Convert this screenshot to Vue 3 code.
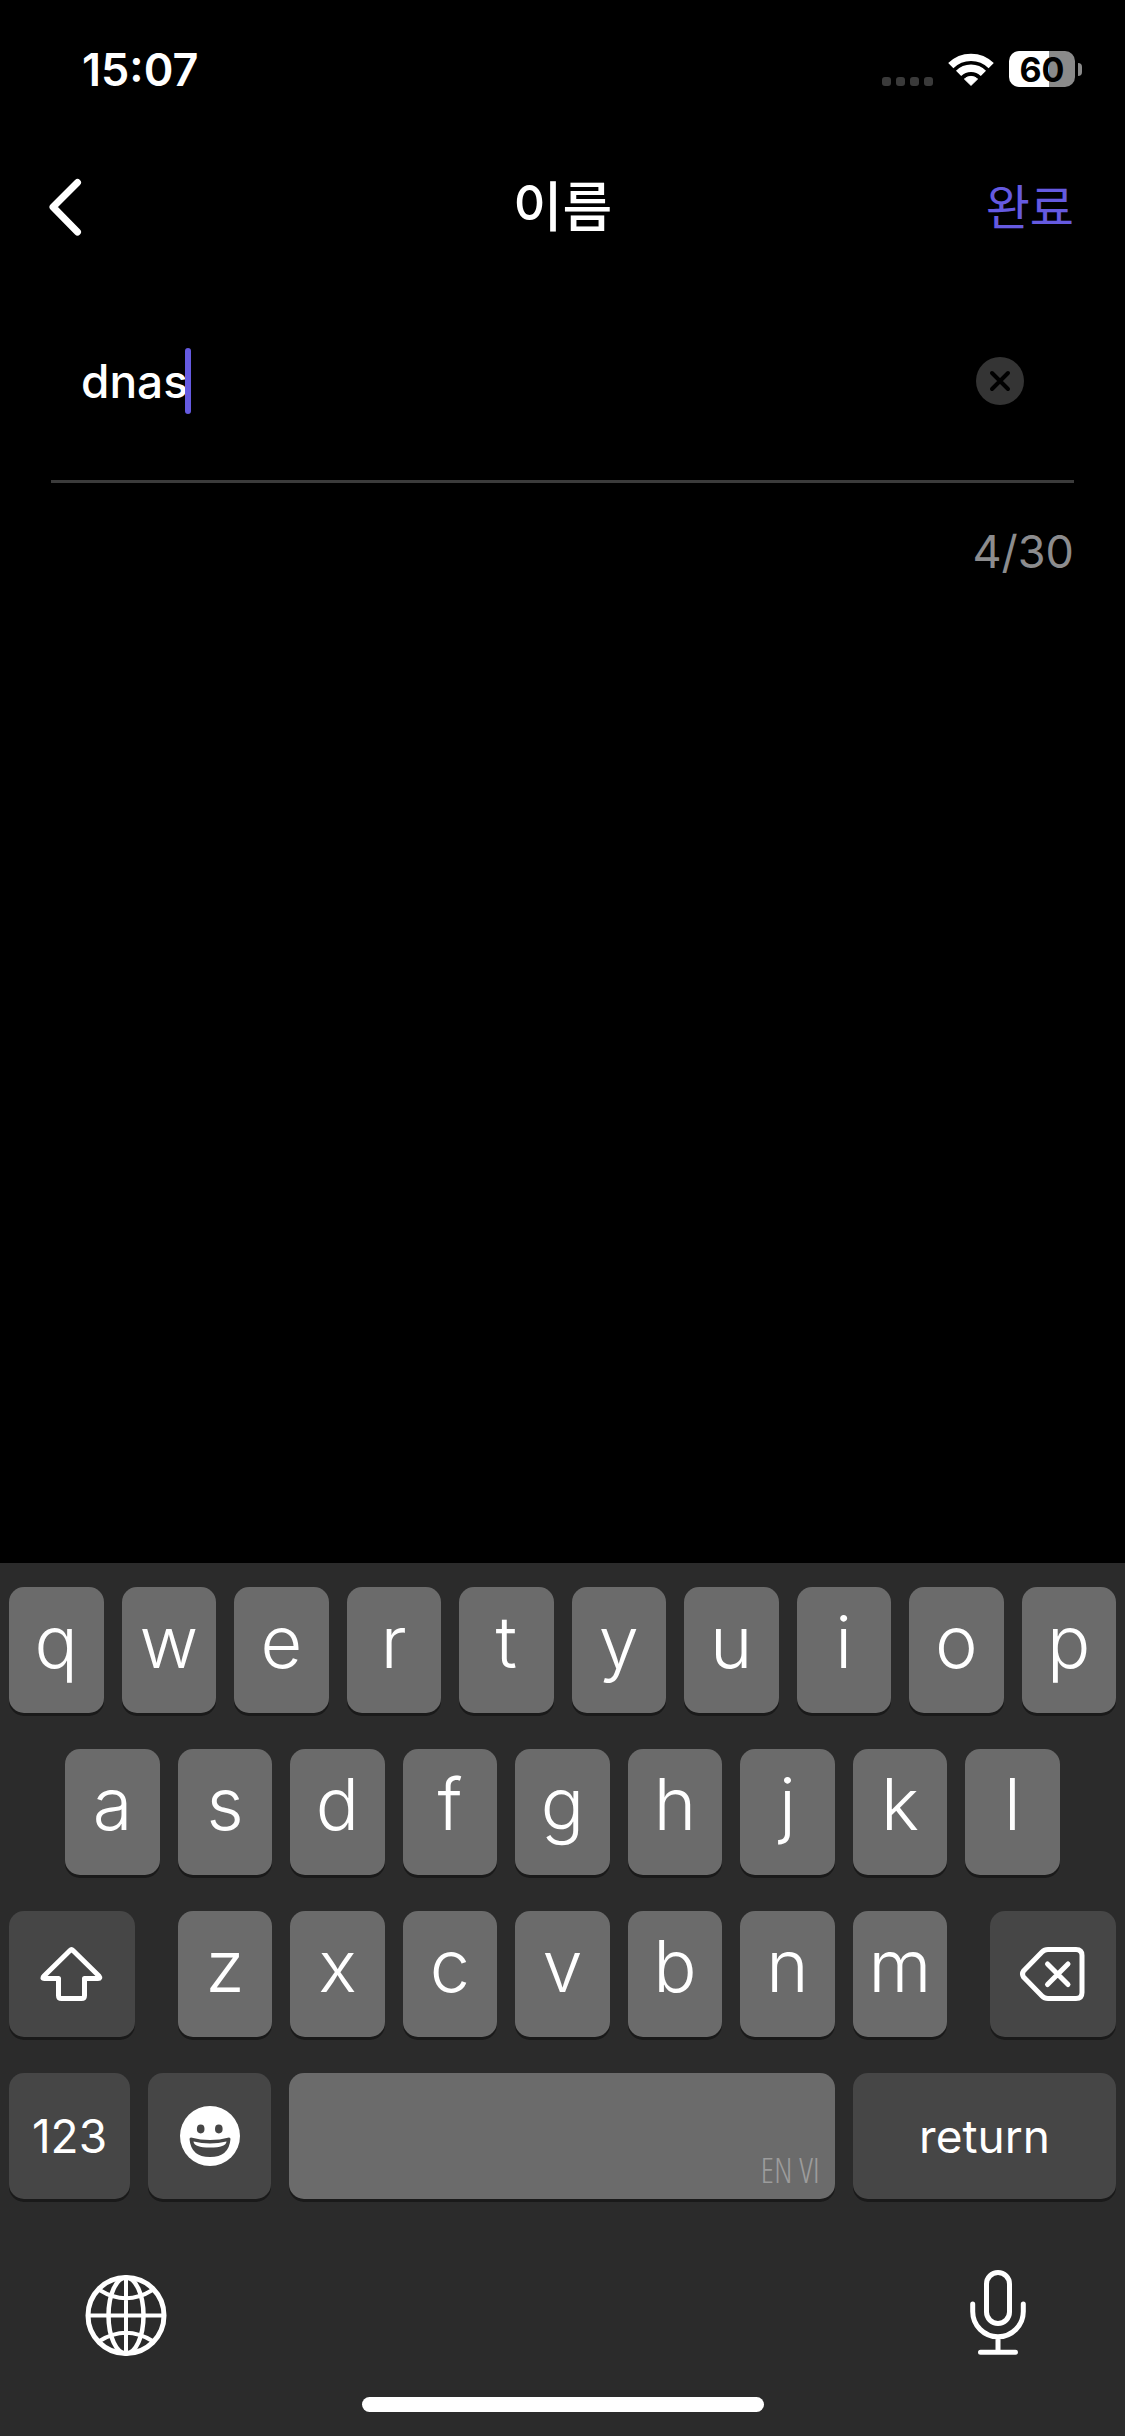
<script setup>
import { computed, ref } from 'vue'

const MAX_LENGTH = 30
const name = ref('dnas')
const count = computed(() => `${name.value.length}/${MAX_LENGTH}`)

const topRow = [...'qwertyuiop']
const homeRow = [...'asdfghjkl']
const bottomRow = [...'zxcvbnm']

const type = (letter) => {
  if (name.value.length < MAX_LENGTH) name.value += letter
}
const erase = () => {
  name.value = name.value.slice(0, -1)
}
</script>

<template>
  <div class="screen">
    <div class="status">
      <time class="clock">15:07</time>
      <div class="indicators">
        <div class="cellular"><i v-for="n in 4" :key="n"></i></div>
        <svg class="wifi" viewBox="0 0 46 33" aria-hidden="true">
          <path d="M2.8 12.6A28.8 28.8 0 0 1 43.2 12.6M10.6 20.4A17.6 17.6 0 0 1 35.4 20.4" fill="none" stroke="#fff" stroke-width="7.4" />
          <path d="M23 32.4L16.4 26A9.6 9.6 0 0 1 29.6 26Z" fill="#fff" stroke="#fff" stroke-linejoin="round" />
        </svg>
        <div class="battery">
          <span class="level">60</span>
          <i class="tip"></i>
        </div>
      </div>
    </div>

    <header class="bar">
      <button class="back" type="button" aria-label="뒤로">
        <svg viewBox="0 0 36 60"><path d="M29.5 5.5L5 30L29.5 55" /></svg>
      </button>
      <h1 class="title">이름</h1>
      <button class="done" type="button">완료</button>
    </header>

    <main class="form">
      <div class="field">
        <label class="entry">
          <input v-model="name" class="input" type="text" :maxlength="MAX_LENGTH" aria-label="이름" />
          <i class="caret"></i>
        </label>
        <button class="clear" type="button" aria-label="지우기" @click="name = ''">
          <svg viewBox="0 0 48 48"><path d="M16 16L32 32M32 16L16 32" /></svg>
        </button>
      </div>
      <p class="count">{{ count }}</p>
    </main>

    <section class="keyboard">
      <div class="row">
        <button v-for="k in topRow" :key="k" class="key letter" type="button" @click="type(k)">{{ k }}</button>
      </div>
      <div class="row">
        <button v-for="k in homeRow" :key="k" class="key letter" type="button" @click="type(k)">{{ k }}</button>
      </div>
      <div class="row spread">
        <button class="key dark square" type="button" aria-label="shift">
          <svg class="glyph" viewBox="0 0 126 126">
            <path d="M61 39.5Q62.5 38 64 39.5L90 65Q92 67.5 89 67.5H75.5V84.5Q75.5 87.5 72.5 87.5H52.5Q49.5 87.5 49.5 84.5V67.5H35.5Q32.5 67.5 35 65Z" />
          </svg>
        </button>
        <div class="row inner">
          <button v-for="k in bottomRow" :key="k" class="key letter" type="button" @click="type(k)">{{ k }}</button>
        </div>
        <button class="key dark square" type="button" aria-label="delete" @click="erase">
          <svg class="glyph" viewBox="0 0 126 126">
            <path d="M58 38.5H86Q92 38.5 92 44.5V81.5Q92 87.5 86 87.5H58Q54.5 87.5 52 85L33.5 66Q31.5 63 33.5 60L52 41Q54.5 38.5 58 38.5Z" />
            <path d="M57.5 53L78 73.5M78 53L57.5 73.5" />
          </svg>
        </button>
      </div>
      <div class="row wide">
        <button class="key dark numbers" type="button">123</button>
        <button class="key dark emoji" type="button" aria-label="emoji">
          <svg class="face" viewBox="0 0 60 60">
            <circle cx="30" cy="30" r="30" fill="#fff" />
            <g fill="#464646">
              <ellipse cx="20.7" cy="23" rx="3.8" ry="4.4" />
              <ellipse cx="38.8" cy="23" rx="3.8" ry="4.4" />
              <path d="M11 31.5Q30 36.5 49 31.5Q50.5 31.5 50.5 33Q49 51 30 51Q11 51 9.5 33Q9.5 31.5 11 31.5Z" />
            </g>
            <path d="M13.5 35.5Q30 39.5 46.5 35.5Q46 41.5 30 41.5Q14 41.5 13.5 35.5Z" fill="#fff" />
          </svg>
        </button>
        <button class="key space" type="button" @click="type(' ')">EN VI</button>
        <button class="key dark return" type="button">return</button>
      </div>
      <div class="tools">
        <button class="tool" type="button" aria-label="language">
          <svg viewBox="0 0 84 88">
            <circle cx="42" cy="46.5" r="38" />
            <ellipse cx="42" cy="46.5" rx="17.5" ry="38" stroke-width="4.5" />
            <path d="M42 8V85M4 46.5H80M15.5 21Q42 37.5 68.5 21M15.5 72Q42 55.5 68.5 72" stroke-width="4" />
          </svg>
        </button>
        <button class="tool" type="button" aria-label="dictation">
          <svg viewBox="0 0 84 88">
            <rect x="29.5" y="3.5" width="23" height="51" rx="11.5" />
            <path d="M15.7 35V42.5A25.3 25.3 0 0 0 66.3 42.5V35M41 68V83M23.5 83.3H58.5" />
          </svg>
        </button>
      </div>
      <div class="home"></div>
    </section>
  </div>
</template>

<style>
body {
  margin: 0;
  background: #000;
}
</style>

<style scoped>
.screen {
  display: flex;
  flex-direction: column;
  min-height: 100vh;
  background: #000;
  color: #fff;
  font-family: Inter, "Noto Sans CJK KR", sans-serif;
}
button {
  margin: 0;
  padding: 0;
  border: 0;
  background: none;
  color: inherit;
  font: inherit;
}
svg {
  display: block;
}
.status {
  display: flex;
  align-items: center;
  justify-content: space-between;
  height: 138px;
  padding: 0 43px 0 82px;
}
.clock {
  font-size: 45px;
  font-weight: 600;
}
.indicators {
  display: flex;
  align-items: center;
  gap: 15px;
}
.cellular {
  display: flex;
  align-items: flex-end;
  gap: 5px;
  height: 33px;
}
.cellular i {
  width: 9px;
  height: 9px;
  border-radius: 3px;
  background: #3a3a3a;
}
.wifi {
  width: 46px;
  height: 33px;
}
.battery {
  display: flex;
  align-items: center;
  gap: 3px;
}
.level {
  width: 66px;
  height: 36px;
  border-radius: 10px;
  background: linear-gradient(90deg, #fff 60%, #8a8a8a 60%);
  color: #000;
  font-size: 34px;
  font-weight: 700;
  line-height: 37px;
  text-align: center;
}
.tip {
  width: 4px;
  height: 13px;
  border-radius: 0 4px 4px 0;
  background: #8a8a8a;
}
.bar {
  display: grid;
  grid-template-columns: 1fr auto 1fr;
  align-items: center;
  height: 138px;
  padding: 0 48px;
}
.back {
  justify-self: start;
}
.back svg {
  width: 36px;
  height: 60px;
  fill: none;
  stroke: #fff;
  stroke-width: 7;
  stroke-linecap: round;
  stroke-linejoin: round;
}
.title {
  margin: 0;
  padding-top: 2px;
  font-size: 54px;
  font-weight: 500;
  line-height: 72px;
}
.done {
  justify-self: end;
  padding: 2px 3px 0 0;
  color: #655ae0;
  font-size: 48px;
  line-height: 72px;
}
.form {
  flex: 1;
  padding: 6px 51px 0;
}
.field {
  display: flex;
  align-items: center;
  height: 198px;
  padding: 0 50px 0 30px;
  border-bottom: 3px solid #3b3b3b;
}
.entry {
  display: flex;
  flex: 1;
  align-items: center;
  min-width: 0;
}
.input {
  field-sizing: content;
  max-width: 100%;
  margin-right: -3px;
  padding: 0;
  border: 0;
  outline: 0;
  background: none;
  color: #fff;
  caret-color: transparent;
  font: 500 46px/60px Inter, "Noto Sans CJK KR", sans-serif;
}
.caret {
  width: 6px;
  height: 66px;
  border-radius: 3px;
  background: #655ae0;
}
.clear svg {
  width: 48px;
  height: 48px;
  border-radius: 50%;
  background: #343434;
  stroke: #000;
  stroke-width: 4;
  stroke-linecap: round;
}
.count {
  margin: 42px 0 0;
  color: #8c8c8e;
  font-size: 45px;
  line-height: 54px;
  text-align: right;
}
.keyboard {
  padding: 24px 0;
  background: #2b2b2b;
}
.row {
  display: flex;
  justify-content: center;
  gap: 18px;
  margin-bottom: 36px;
  padding: 0 9px;
}
.spread {
  justify-content: space-between;
}
.inner {
  flex: 1;
  margin: 0;
  padding: 0;
}
.wide {
  margin-bottom: 0;
}
.key {
  height: 126px;
  border-radius: 15px;
  background: #6b6b6b;
  box-shadow: 0 3px 0 #1a1a1a;
  font-size: 46px;
}
.letter {
  width: calc((100vw - 180px) / 10);
  padding-bottom: 18px;
  font-size: 72px;
  font-weight: 300;
}
.dark {
  background: #464646;
}
.square {
  width: 126px;
}
.glyph {
  width: 126px;
  height: 126px;
  fill: none;
  stroke: #fff;
  stroke-width: 5;
  stroke-linecap: round;
  stroke-linejoin: round;
}
.numbers {
  width: 121px;
}
.emoji {
  display: grid;
  place-items: center;
  width: 123px;
}
.face {
  width: 60px;
  height: 60px;
}
.space {
  display: flex;
  flex: 1;
  align-items: flex-end;
  justify-content: flex-end;
  padding: 0 15px 6px;
  color: #9c9c9c;
  font-family: "Open Sans Condensed Light", "Open Sans Condensed", "Liberation Sans Narrow", "Liberation Sans", sans-serif;
  font-size: 35px;
  font-weight: 300;
}
.return {
  width: 263px;
}
.tools {
  display: flex;
  justify-content: space-between;
  padding: 70px 84px 40px;
}
.tool svg {
  width: 84px;
  height: 88px;
  fill: none;
  stroke: #fff;
  stroke-width: 5;
  stroke-linecap: round;
}
.home {
  width: 402px;
  height: 15px;
  margin: 0 auto;
  border-radius: 8px;
  background: #fff;
}
</style>
